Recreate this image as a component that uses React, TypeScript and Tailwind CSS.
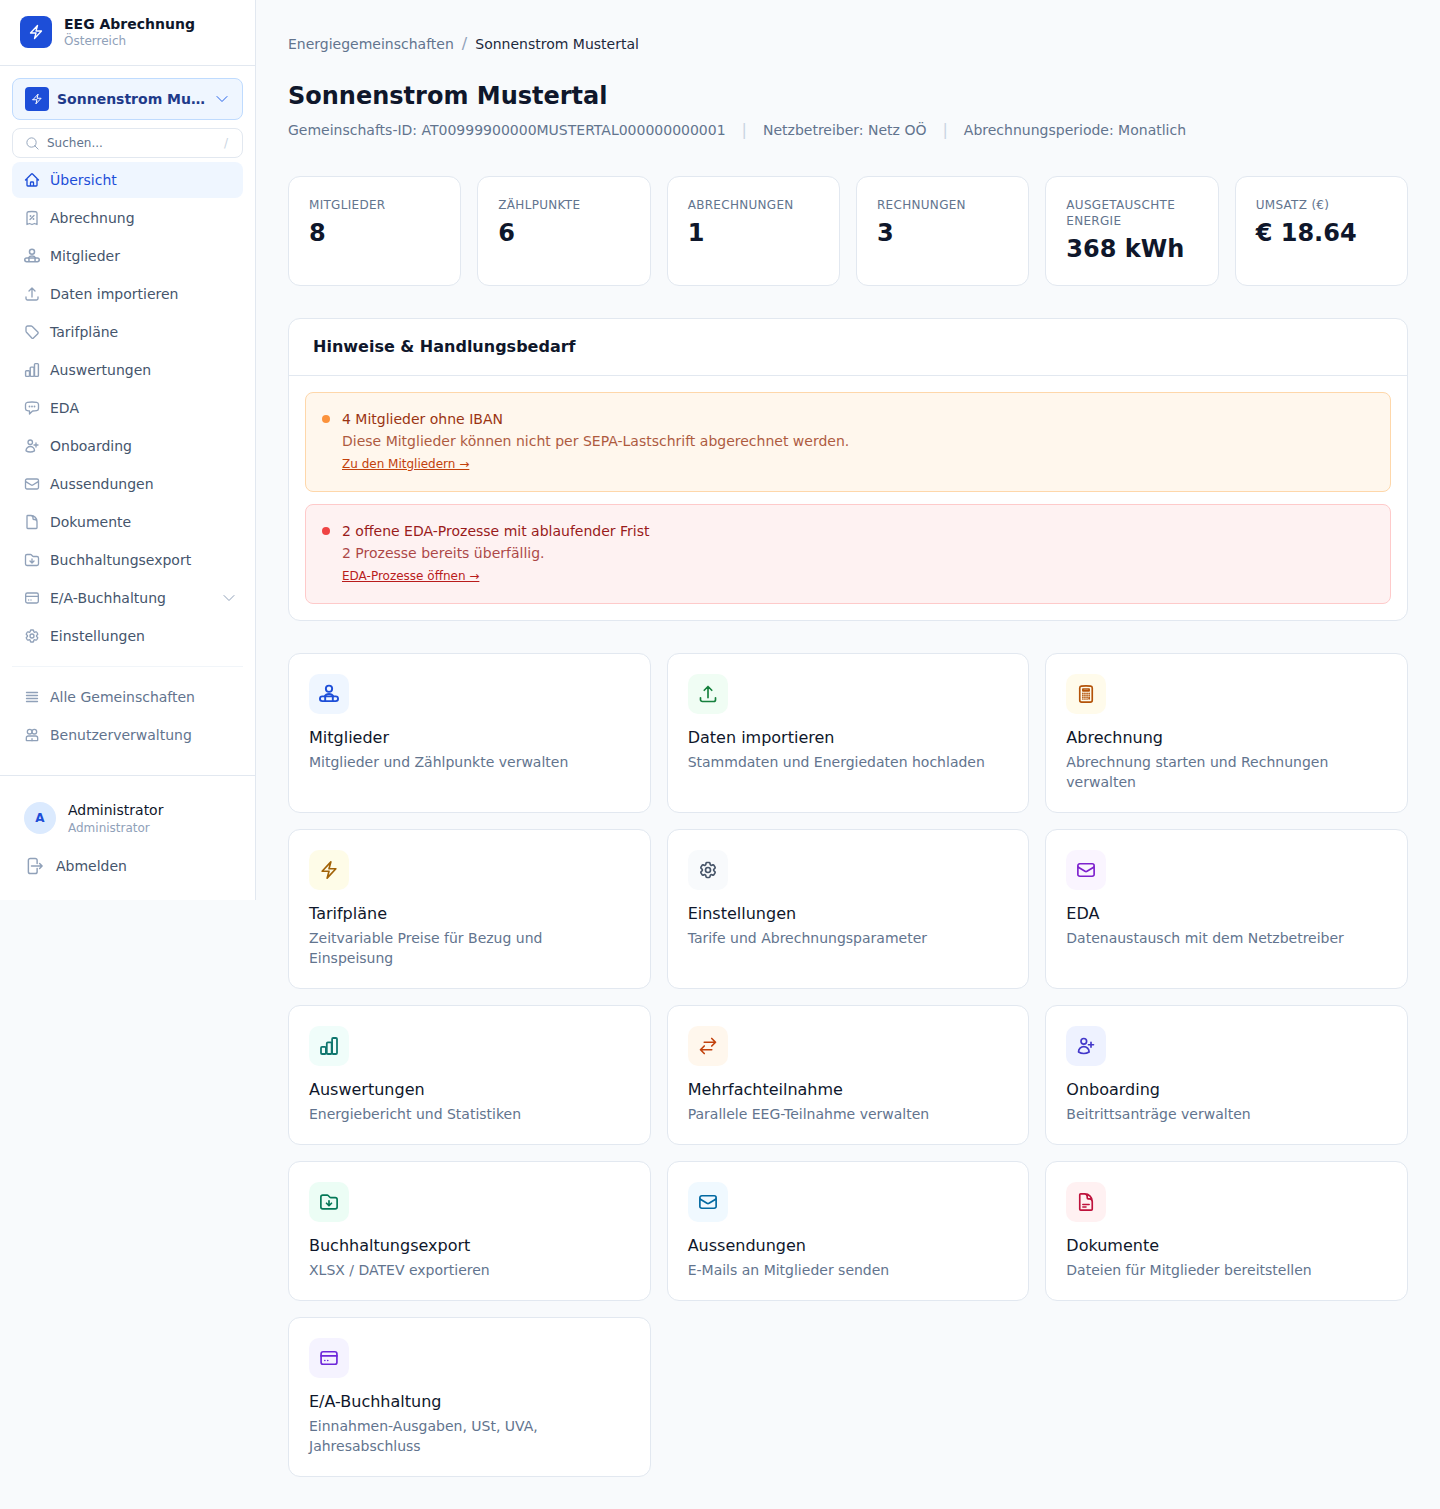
import type { ComponentType, ReactNode, SVGProps } from "react";
import {
  HiOutlineArrowRightOnRectangle,
  HiOutlineArrowUpTray,
  HiOutlineArrowsRightLeft,
  HiOutlineBars4,
  HiOutlineBolt,
  HiOutlineCalculator,
  HiOutlineChatBubbleLeftEllipsis,
  HiOutlineChevronDown,
  HiOutlineCog6Tooth,
  HiOutlineDocument,
  HiOutlineDocumentText,
  HiOutlineEnvelope,
  HiOutlineFolderArrowDown,
  HiOutlineHome,
  HiOutlineMagnifyingGlass,
  HiOutlineReceiptPercent,
  HiOutlineUserPlus,
} from "react-icons/hi2";

type IconType = ComponentType<SVGProps<SVGSVGElement> & { className?: string }>;

const MembersIcon: IconType = (props) => (
  <svg viewBox="1.500 1.500 21 21" fill="none" stroke="currentColor" strokeWidth={1.5} strokeLinecap="round" strokeLinejoin="round" {...props}>
    <circle cx="12" cy="6.500" r="3.300" />
    <path d="M7.500 14.500c.8-1.700 2.500-2.500 4.500-2.500s3.700.8 4.500 2.500" />
    <rect x="2.500" y="14.500" width="19" height="5" rx="2.500" />
    <path d="M8 15v4M16 15v4" />
  </svg>
);

const UsersAdminIcon: IconType = (props) => (
  <svg viewBox="0 0 24 24" fill="none" stroke="currentColor" strokeWidth={1.5} strokeLinecap="round" strokeLinejoin="round" {...props}>
    <circle cx="8.500" cy="7" r="3.500" />
    <circle cx="15.500" cy="7" r="3.500" />
    <path d="M3.500 20v-3.500a3 3 0 0 1 3-3h11a3 3 0 0 1 3 3V20a.5.5 0 0 1-.5.500H4a.5.5 0 0 1-.5-.500Z" />
    <path d="M12 20.500v-3" />
  </svg>
);

const TagIcon: IconType = (props) => (
  <svg viewBox="0 0 24 24" fill="none" stroke="currentColor" strokeWidth={1.5} strokeLinecap="round" strokeLinejoin="round" {...props}>
    <path d="M3 5.500A2.500 2.500 0 0 1 5.500 3h5.100c.7 0 1.300.3 1.800.7l8.300 8.300c.7.7.7 1.800 0 2.500l-6.500 6.500c-.7.7-1.800.7-2.500 0L3.700 12.400c-.4-.5-.7-1.100-.7-1.800V5.500Z" />
  </svg>
);

const ChartIcon: IconType = (props) => (
  <svg viewBox="0.750 0.750 22.500 22.500" fill="none" stroke="currentColor" strokeWidth={1.5} strokeLinecap="round" strokeLinejoin="round" {...props}>
    <rect x="3" y="13" width="5.500" height="8" rx="1.200" />
    <rect x="9.500" y="8" width="5.500" height="13" rx="1.200" />
    <rect x="15.500" y="3" width="5.500" height="18" rx="1.200" />
  </svg>
);

const CardIcon: IconType = (props) => (
  <svg viewBox="0 0 24 24" fill="none" stroke="currentColor" strokeWidth={1.5} strokeLinecap="round" strokeLinejoin="round" {...props}>
    <rect x="2.500" y="4.500" width="19" height="15" rx="2.500" />
    <path d="M2.500 9.500h19M7 15h.01M10.500 15h.01" />
  </svg>
);

const navItems: { label: string; icon: IconType; active?: boolean; chevron?: boolean }[] = [
  { label: "Übersicht", icon: HiOutlineHome, active: true },
  { label: "Abrechnung", icon: HiOutlineReceiptPercent },
  { label: "Mitglieder", icon: MembersIcon },
  { label: "Daten importieren", icon: HiOutlineArrowUpTray },
  { label: "Tarifpläne", icon: TagIcon },
  { label: "Auswertungen", icon: ChartIcon },
  { label: "EDA", icon: HiOutlineChatBubbleLeftEllipsis },
  { label: "Onboarding", icon: HiOutlineUserPlus },
  { label: "Aussendungen", icon: HiOutlineEnvelope },
  { label: "Dokumente", icon: HiOutlineDocument },
  { label: "Buchhaltungsexport", icon: HiOutlineFolderArrowDown },
  { label: "E/A-Buchhaltung", icon: CardIcon, chevron: true },
  { label: "Einstellungen", icon: HiOutlineCog6Tooth },
];

const stats = [
  { label: "Mitglieder", value: "8" },
  { label: "Zählpunkte", value: "6" },
  { label: "Abrechnungen", value: "1" },
  { label: "Rechnungen", value: "3" },
  { label: "Ausgetauschte Energie", value: "368 kWh" },
  { label: "Umsatz (€)", value: "€ 18.64" },
];

const tiles: { title: string; text: string; icon: IconType; box: string; color: string }[] = [
  { title: "Mitglieder", text: "Mitglieder und Zählpunkte verwalten", icon: MembersIcon, box: "bg-[#eff6ff]", color: "text-[#1d4ed8]" },
  { title: "Daten importieren", text: "Stammdaten und Energiedaten hochladen", icon: HiOutlineArrowUpTray, box: "bg-[#f0fdf4]", color: "text-[#15803d]" },
  { title: "Abrechnung", text: "Abrechnung starten und Rechnungen verwalten", icon: HiOutlineCalculator, box: "bg-[#fffbeb]", color: "text-[#b45309]" },
  { title: "Tarifpläne", text: "Zeitvariable Preise für Bezug und Einspeisung", icon: HiOutlineBolt, box: "bg-[#fefce8]", color: "text-[#a16207]" },
  { title: "Einstellungen", text: "Tarife und Abrechnungsparameter", icon: HiOutlineCog6Tooth, box: "bg-[#f8fafc]", color: "text-[#475569]" },
  { title: "EDA", text: "Datenaustausch mit dem Netzbetreiber", icon: HiOutlineEnvelope, box: "bg-[#faf5ff]", color: "text-[#7e22ce]" },
  { title: "Auswertungen", text: "Energiebericht und Statistiken", icon: ChartIcon, box: "bg-[#f0fdfa]", color: "text-[#0f766e]" },
  { title: "Mehrfachteilnahme", text: "Parallele EEG-Teilnahme verwalten", icon: HiOutlineArrowsRightLeft, box: "bg-[#fff7ed]", color: "text-[#c2410c]" },
  { title: "Onboarding", text: "Beitrittsanträge verwalten", icon: HiOutlineUserPlus, box: "bg-[#eef2ff]", color: "text-[#4338ca]" },
  { title: "Buchhaltungsexport", text: "XLSX / DATEV exportieren", icon: HiOutlineFolderArrowDown, box: "bg-[#ecfdf5]", color: "text-[#047857]" },
  { title: "Aussendungen", text: "E-Mails an Mitglieder senden", icon: HiOutlineEnvelope, box: "bg-[#f0f9ff]", color: "text-[#0369a1]" },
  { title: "Dokumente", text: "Dateien für Mitglieder bereitstellen", icon: HiOutlineDocumentText, box: "bg-[#fff1f2]", color: "text-[#be123c]" },
  { title: "E/A-Buchhaltung", text: "Einnahmen-Ausgaben, USt, UVA, Jahresabschluss", icon: CardIcon, box: "bg-[#f5f3ff]", color: "text-[#6d28d9]" },
];

function Alert(props: { wrap: string; dot: string; text: string; linkColor: string; body: string; link: string; children: ReactNode }) {
  return (
    <div className={`flex h-[100px] gap-3 rounded-lg border px-4 pt-[15px] ${props.wrap}`}>
      <span className={`mt-[7px] h-2 w-2 shrink-0 rounded-full ${props.dot}`} />
      <div>
        <div className={`text-sm leading-[22px] ${props.text}`}>{props.children}</div>
        <div className={`text-sm leading-[22px] opacity-80 ${props.text}`}>{props.body}</div>
        <a className={`mt-1 block text-xs leading-[16px] underline ${props.linkColor}`}>{props.link}</a>
      </div>
    </div>
  );
}

function Sidebar() {
  return (
    <aside className="flex h-[900px] w-64 shrink-0 flex-col border-r border-[#e2e8f0] bg-white">
      <div className="flex h-[66px] shrink-0 items-start gap-3 border-b border-[#e2e8f0] px-5 pt-4">
        <div className="flex h-8 w-8 items-center justify-center rounded-lg bg-[#1d4ed8]">
          <HiOutlineBolt className="h-4 w-4 text-white" strokeWidth={2} />
        </div>
        <div className="-mt-0.5">
          <div className="text-sm leading-5 font-bold text-slate-900">EEG Abrechnung</div>
          <div className="-mt-px text-xs leading-4 text-slate-400">Österreich</div>
        </div>
      </div>

      <div className="flex flex-1 flex-col px-3 pt-3">
        <button className="flex h-[42px] w-full items-center gap-2 rounded-lg border border-[#bfdbfe] bg-[#eff6ff] pr-3 pl-3">
          <span className="flex h-6 w-6 shrink-0 items-center justify-center rounded bg-[#1d4ed8]">
            <HiOutlineBolt className="h-3 w-3 text-white" strokeWidth={2} />
          </span>
          <span className="min-w-0 flex-1 truncate text-left text-sm font-bold text-[#1e3a8a]">Sonnenstrom Mustertal</span>
          <HiOutlineChevronDown className="h-4 w-4 shrink-0 text-[#2563eb]" />
        </button>

        <div className="mt-2 flex h-[30px] items-center rounded-lg border border-[#e2e8f0] px-3 text-xs text-slate-500">
          <HiOutlineMagnifyingGlass className="mr-[7px] h-[15px] w-[15px] text-slate-400" />
          <span className="flex-1">Suchen...</span>
          <span className="mr-0.5 text-slate-300">/</span>
        </div>

        <nav className="mt-1 flex flex-col gap-0.5">
          {navItems.map((item) => (
            <div
              key={item.label}
              className={`flex h-9 items-center gap-2.5 rounded-lg px-3 text-sm ${item.active ? "bg-[#eff6ff] text-[#1d4ed8]" : "text-slate-600"}`}
            >
              <item.icon className={`h-4 w-4 shrink-0 ${item.active ? "text-[#1d4ed8]" : "text-slate-400"}`} strokeWidth={2} />
              <span className="flex-1">{item.label}</span>
              {item.chevron && <HiOutlineChevronDown className="-mr-1.5 h-4 w-4 text-slate-400" />}
            </div>
          ))}
        </nav>

        <div className="mt-3 flex flex-col gap-0.5 border-t border-slate-100 pt-3">
          <div className="flex h-9 items-center gap-2.5 px-3 text-sm text-slate-500">
            <HiOutlineBars4 className="h-4 w-4 text-slate-400" strokeWidth={2} />
            Alle Gemeinschaften
          </div>
          <div className="flex h-9 items-center gap-2.5 px-3 text-sm text-slate-500">
            <UsersAdminIcon className="h-4 w-4 text-slate-400" strokeWidth={2} />
            Benutzerverwaltung
          </div>
        </div>
      </div>

      <div className="h-[125px] shrink-0 border-t border-[#e2e8f0] px-6 pt-6">
        <div className="flex items-center gap-3">
          <div className="flex h-8 w-8 items-center justify-center rounded-full bg-[#dbeafe] text-xs font-bold text-[#1d4ed8]">A</div>
          <div>
            <div className="text-sm leading-5 text-slate-900">Administrator</div>
            <div className="text-xs leading-4 text-slate-400">Administrator</div>
          </div>
        </div>
        <div className="mt-5 flex items-center gap-3 text-sm text-slate-600">
          <HiOutlineArrowRightOnRectangle className="h-5 w-5 text-slate-400" strokeWidth={1.75} />
          Abmelden
        </div>
      </div>
    </aside>
  );
}

export default function App() {
  return (
    <div className="flex min-h-screen items-start bg-[#f8fafc] [font-family:'DejaVu_Sans',sans-serif]">
      <Sidebar />
      <main className="min-w-0 flex-1 p-8">
        <div className="flex items-center gap-2 text-sm leading-6">
          <span className="text-slate-500">Energiegemeinschaften</span>
          <span className="text-base text-slate-400">/</span>
          <span className="text-slate-800">Sonnenstrom Mustertal</span>
        </div>

        <h1 className="mt-6 text-2xl leading-8 font-bold text-slate-900">Sonnenstrom Mustertal</h1>
        <div className="mt-1.5 flex items-center gap-4 text-sm leading-6 text-slate-500">
          <span>Gemeinschafts-ID: AT00999900000MUSTERTAL000000000001</span>
          <span className="text-base text-slate-300">|</span>
          <span>Netzbetreiber: Netz OÖ</span>
          <span className="text-base text-slate-300">|</span>
          <span>Abrechnungsperiode: Monatlich</span>
        </div>

        <div className="mt-[34px] grid grid-cols-6 gap-4">
          {stats.map((s) => (
            <div key={s.label} className="h-[110px] rounded-xl border border-[#e2e8f0] bg-white px-5 pt-5">
              <div className="text-xs leading-4 tracking-wide text-slate-500 uppercase">{s.label}</div>
              <div className="mt-1 text-2xl leading-8 font-bold text-slate-900">{s.value}</div>
            </div>
          ))}
        </div>

        <section className="mt-8 rounded-xl border border-[#e2e8f0] bg-white">
          <div className="flex h-[57px] items-center border-b border-[#e2e8f0] px-6 text-base font-bold text-slate-900">Hinweise &amp; Handlungsbedarf</div>
          <div className="flex flex-col gap-3 p-4">
            <Alert
              wrap="border-[#fed7aa] bg-[#fff7ed]"
              dot="bg-[#fb923c]"
              text="text-[#9a3412]"
              linkColor="text-[#c2410c]"
              body="Diese Mitglieder können nicht per SEPA-Lastschrift abgerechnet werden."
              link="Zu den Mitgliedern →"
            >
              4 Mitglieder ohne IBAN
            </Alert>
            <Alert
              wrap="border-[#fecaca] bg-[#fef2f2]"
              dot="bg-[#ef4444]"
              text="text-[#991b1b]"
              linkColor="text-[#b91c1c]"
              body="2 Prozesse bereits überfällig."
              link="EDA-Prozesse öffnen →"
            >
              2 offene EDA-Prozesse mit ablaufender Frist
            </Alert>
          </div>
        </section>

        <div className="mt-8 grid grid-cols-3 gap-4">
          {tiles.map((t) => (
            <div key={t.title} className="rounded-xl border border-[#e2e8f0] bg-white p-5">
              <div className={`flex h-10 w-10 items-center justify-center rounded-[10px] ${t.box}`}>
                <t.icon className={`h-5 w-5 ${t.color}`} strokeWidth={2} />
              </div>
              <div className="mt-3 text-base leading-6 text-slate-900">{t.title}</div>
              <div className="mt-0.5 text-sm leading-5 text-slate-500">{t.text}</div>
            </div>
          ))}
        </div>
      </main>
    </div>
  );
}
